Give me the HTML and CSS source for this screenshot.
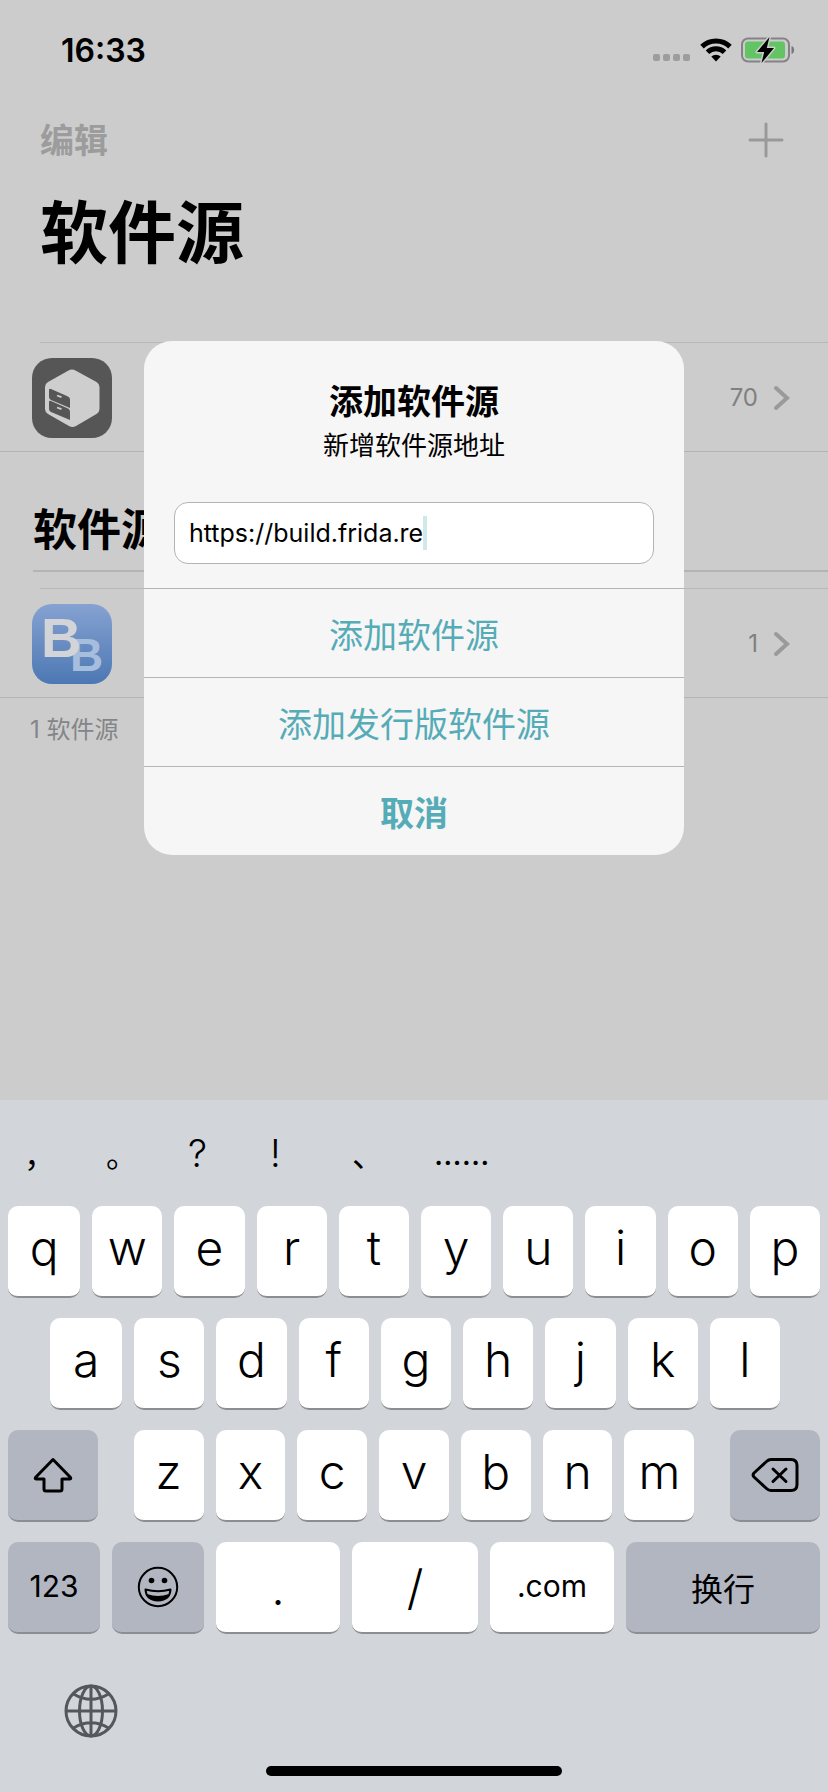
FILE: index.html
```html
<!DOCTYPE html>
<html lang="zh-CN">
<head>
<meta charset="utf-8">
<meta name="viewport" content="width=device-width, initial-scale=1">
<title>软件源</title>
<link rel="stylesheet" href="styles.css">
</head>
<body>
<div class="screen">
  <main class="app">
    <header class="status">
      <time class="clock">16:33</time>
      <div class="status-icons">
        <svg width="38" height="24" viewBox="0 0 38 24" fill="#9d9d9d"><rect x="0" y="16" width="7" height="7" rx="2"/><rect x="10" y="16" width="7" height="7" rx="2"/><rect x="20" y="16" width="7" height="7" rx="2"/><rect x="30" y="16" width="7" height="7" rx="2"/></svg>
        <svg width="32" height="24" viewBox="0 0 32 24" fill="none" stroke="#000" stroke-width="5"><path d="M2 8.600a20 20 0 0 1 28 0"/><path d="M7.500 14.200a12.200 12.200 0 0 1 17 0"/><path d="M11.300 18.600a6.800 6.800 0 0 1 9.400 0L16 23.500z" fill="#000" stroke="none"/></svg>
        <svg width="54" height="26" viewBox="0 0 54 26"><rect x="1" y="1.500" width="47" height="23" rx="6" fill="none" stroke="#848286" stroke-width="2"/><rect x="4" y="4.500" width="40" height="17" rx="3" fill="#62c463"/><path d="M50.500 9c3.500 1 3.500 7 0 8z" fill="#777"/><path d="M28.500 0 16 15h7.200L20.500 26 33 11h-7.200z" fill="#000" stroke="#ccc" stroke-width="3" paint-order="stroke" stroke-linejoin="round"/></svg>
      </div>
    </header>
    <nav class="nav">
      <button class="edit" type="button">编辑</button>
      <button class="add" type="button" aria-label="添加"><svg width="36" height="36" viewBox="0 0 36 36" stroke="#999" stroke-width="3" stroke-linecap="round"><path d="M18 2v32M2 18h32"/></svg></button>
    </nav>
    <h1 class="page-title">软件源</h1>
    <ul class="list">
      <li class="row">
        <svg class="row-icon" width="80" height="80" viewBox="0 0 80 80"><rect width="80" height="80" rx="20" fill="#565656"/><path d="M36.500 12.500q3.500-2 7 0l21 11.500q3 1.800 3 5v22q0 3.200-3 5L44 68q-3.500 2-7 0L16 56q-3-1.800-3-5V29q0-3.200 3-5z" fill="#cecece"/><g fill="#565656"><path d="m19 31 17 7.500q2 1 2 3V50L19 42q-2-1-2-3v-7q0-2 2-1z"/><path d="m19 43 17 7.500q2 1 2 3V62L19 54q-2-1-2-3v-7q0-2 2-1z"/></g><path d="m25 37.500 4.500 1.700M25 49.500l4.500 1.700" stroke="#cecece" stroke-width="1.800"/></svg>
        <span class="count">70</span>
        <svg class="chevron" width="16" height="26" viewBox="0 0 16 26"><path d="M2 3l11 10L2 23" fill="none" stroke="#9a9a9a" stroke-width="4" stroke-linecap="round"/></svg>
      </li>
    </ul>
    <h2 class="section-title">软件源</h2>
    <ul class="list">
      <li class="row">
        <svg class="row-icon" width="80" height="80" viewBox="0 0 80 80"><defs><linearGradient id="blue" x2="0" y2="1"><stop stop-color="#85a2d1"/><stop offset="1" stop-color="#4d78b3"/></linearGradient></defs><rect width="80" height="80" rx="20" fill="url(#blue)"/><text class="letter" x="38" y="67" font-size="46" fill="#a6bddd">B</text><text class="letter" x="9" y="53" font-size="56" fill="#d2d4d7">B</text></svg>
        <span class="count">1</span>
        <svg class="chevron" width="16" height="26" viewBox="0 0 16 26"><path d="M2 3l11 10L2 23" fill="none" stroke="#9a9a9a" stroke-width="4" stroke-linecap="round"/></svg>
      </li>
    </ul>
    <p class="footnote">1 软件源</p>

    <div class="overlay">
      <form class="dialog" role="dialog" aria-labelledby="dialog-title">
        <div class="dialog-body">
          <h2 class="dialog-title" id="dialog-title">添加软件源</h2>
          <label class="dialog-label" for="source">新增软件源地址</label>
          <div class="field"><input class="url" id="source" type="text" value="https://build.frida.re"><span class="caret"></span></div>
        </div>
        <button class="action" type="button">添加软件源</button>
        <button class="action" type="button">添加发行版软件源</button>
        <button class="action cancel" type="button">取消</button>
      </form>
    </div>
  </main>

  <section class="keyboard" aria-label="键盘">
    <div class="suggestions">
      <button type="button">，</button><button type="button">。</button><button class="mark" type="button">?</button><button class="mark" type="button">!</button><button type="button">、</button><button type="button">……</button>
    </div>
    <div class="keys">
      <div class="key-row top-row">
        <button class="key" type="button">q</button><button class="key" type="button">w</button><button class="key" type="button">e</button><button class="key" type="button">r</button><button class="key" type="button">t</button><button class="key" type="button">y</button><button class="key" type="button">u</button><button class="key" type="button">i</button><button class="key" type="button">o</button><button class="key" type="button">p</button>
      </div>
      <div class="key-row home-row">
        <button class="key" type="button">a</button><button class="key" type="button">s</button><button class="key" type="button">d</button><button class="key" type="button">f</button><button class="key" type="button">g</button><button class="key" type="button">h</button><button class="key" type="button">j</button><button class="key" type="button">k</button><button class="key" type="button">l</button>
      </div>
      <div class="key-row shift-row">
        <button class="key dark" type="button" aria-label="Shift"><svg width="40" height="36" viewBox="0 0 40 36" fill="none" stroke="#000" stroke-width="3" stroke-linejoin="round"><path d="M20 2.500 2.500 20.500q-.8 1.500 1 1.500H11v10q0 2 2 2h14q2 0 2-2V22h7.500q1.800 0 1-1.500z"/></svg></button>
        <div class="letters">
          <button class="key" type="button">z</button><button class="key" type="button">x</button><button class="key" type="button">c</button><button class="key" type="button">v</button><button class="key" type="button">b</button><button class="key" type="button">n</button><button class="key" type="button">m</button>
        </div>
        <button class="key dark" type="button" aria-label="删除"><svg width="48" height="36" viewBox="0 0 48 36" fill="none" stroke="#000" stroke-width="3" stroke-linejoin="round" stroke-linecap="round"><path d="M20 2.500h20q6 0 6 6v19q0 6-6 6H20q-2.500 0-4.500-2L3 20q-1.800-2 0-4L15.500 4.500q2-2 4.500-2z"/><path d="m22 12 13 12.500M35 12 22 24.500"/></svg></button>
      </div>
      <div class="key-row bottom-row">
        <button class="key dark small" type="button">123</button>
        <button class="key dark" type="button" aria-label="表情"><svg width="42" height="42" viewBox="0 0 42 42"><circle cx="21" cy="21" r="19.200" fill="none" stroke="#000" stroke-width="2"/><circle cx="14.500" cy="14.500" r="2.800"/><circle cx="27.500" cy="14.500" r="2.800"/><path d="M8.500 23.500q12.500 3.500 25 0-.5 10.500-12.500 11-12-.5-12.500-11z" fill="none" stroke="#000" stroke-width="2" stroke-linejoin="round"/><path d="M10 28q11 4 22 0-2.500 6-11 6.500-8.500-.5-11-6.500z"/></svg></button>
        <button class="key symbol" type="button">.</button>
        <button class="key symbol" type="button">/</button>
        <button class="key small" type="button">.com</button>
        <button class="key dark return" type="button">换行</button>
      </div>
    </div>
    <div class="tools">
      <button class="globe" type="button" aria-label="切换键盘"><svg width="54" height="54" viewBox="0 0 54 54" fill="none" stroke="#54585c" stroke-width="3"><circle cx="27" cy="27" r="25"/><ellipse cx="27" cy="27" rx="11.500" ry="25"/><path d="M27 2v50M2 27h50M9.500 10q17.500 10.500 35 0M9.500 44q17.500-10.500 35 0"/></svg></button>
    </div>
    <div class="home-indicator"></div>
  </section>
</div>
</body>
</html>
```
FILE: styles.css
```css
* { box-sizing: border-box; }
body {
  margin: 0;
  font-family: Inter, "Noto Sans CJK SC", sans-serif;
  color: #000;
  background: #ccc;
}
button {
  margin: 0;
  padding: 0;
  border: 0;
  background: none;
  color: inherit;
  font: inherit;
}
svg { display: block; flex: none; }
h1, h2, p, ul { margin: 0; padding: 0; }
ul { list-style: none; }

.screen { min-height: 100vh; display: flex; flex-direction: column; }
.app { position: relative; flex: 1; background: #ccc; }

.status {
  display: flex;
  justify-content: space-between;
  align-items: center;
  height: 100px;
  padding: 0 33px 0 61px;
}
.clock { font-size: 32px; font-weight: 600; }
.status-icons { display: flex; align-items: center; gap: 9px; }

.nav {
  display: flex;
  justify-content: space-between;
  align-items: center;
  height: 80px;
  padding: 0 44px 0 40px;
}
.edit { padding-bottom: 4px; font-size: 34px; font-weight: 700; color: #9c9c9c; }

.page-title {
  padding: 0 40px;
  font-size: 68px;
  font-weight: 700;
  line-height: 106px;
  margin-bottom: 56px;
}

.row {
  display: flex;
  align-items: center;
  height: 110px;
  padding: 2px 38px 0 32px;
  border-bottom: 1px solid #b4b4b4;
  background: linear-gradient(#b8b8b8, #b8b8b8) 40px 0 / 100% 1px no-repeat;
}
.row-icon { margin-right: auto; }
.letter { font-family: "Liberation Sans", sans-serif; font-weight: 700; }
.count { font-size: 24px; color: #808080; }
.chevron { margin-left: 16px; }

.section-title {
  margin: 0 0 16px 33px;
  padding-top: 38px;
  font-size: 44px;
  font-weight: 700;
  line-height: 80px;
  border-bottom: 2px solid #b4b4b4;
}
.footnote {
  padding: 12px 30px;
  font-size: 24px;
  font-weight: 400;
  line-height: 40px;
  color: #848588;
}

.overlay {
  position: absolute;
  inset: 0;
  display: flex;
  align-items: center;
  justify-content: center;
  padding-top: 96px;
}
.dialog {
  width: 540px;
  max-width: 90%;
  border-radius: 28px;
  background: #f6f6f6;
  overflow: hidden;
}
.dialog-body {
  display: flex;
  flex-direction: column;
  padding: 37px 30px 24px;
  text-align: center;
}
.dialog-title { font-size: 34px; font-weight: 700; line-height: 48px; }
.dialog-label { font-size: 26px; font-weight: 400; line-height: 40px; }
.field {
  display: flex;
  align-items: center;
  height: 62px;
  margin-top: 36px;
  padding: 0 14px;
  border: 1px solid #b4b4b4;
  border-radius: 14px;
  background: #fff;
}
.url {
  field-sizing: content;
  max-width: 100%;
  padding: 0;
  border: 0;
  outline: 0;
  background: none;
  color: #000;
  font: 25px Inter, sans-serif;
}
.caret { width: 4px; height: 34px; background: #cfe8e8; }
.action {
  display: block;
  width: 100%;
  height: 89px;
  border-top: 1px solid #b4b4b4;
  font-size: 34px;
  font-weight: 400;
  color: #55abb6;
}
.cancel { font-weight: 700; }

.keyboard { padding-bottom: 16px; background: #d2d6db; }
.suggestions {
  display: flex;
  align-items: center;
  height: 106px;
  padding-left: 24px;
}
.suggestions button {
  min-width: 82px;
  text-align: left;
  font-size: 32px;
  font-weight: 400;
}
.suggestions .mark { font-size: 38px; font-weight: 300; }
.keys { display: grid; gap: 20px; padding: 0 8px; }
.key-row { display: grid; gap: 12px; }
.top-row { grid-template-columns: 72fr repeat(9, 70fr); }
.home-row { grid-template-columns: 72fr repeat(8, 70fr); padding: 0 40px 0 42px; }
.shift-row { grid-template-columns: 90fr 562fr 90fr; gap: 36px; }
.bottom-row { grid-template-columns: 92fr 92fr 124fr 126fr 124fr 194fr; }
.letters { display: grid; grid-template-columns: repeat(7, 1fr); gap: 12px; }
.key {
  display: flex;
  align-items: center;
  justify-content: center;
  min-width: 0;
  height: 92px;
  padding-bottom: 8px;
  border-bottom: 2px solid #8b8e92;
  border-radius: 10px;
  background: #fff;
  font-size: 48px;
  font-weight: 300;
}
.symbol { padding-bottom: 0; }
.dark { padding-bottom: 0; background: #b2b6c0; }
.small { padding-bottom: 2px; font-size: 30px; font-weight: 400; }
.return { font-size: 32px; font-weight: 400; }
.tools { padding: 50px 64px; }
.globe { display: block; }
.home-indicator {
  width: 296px;
  height: 10px;
  margin: -22px auto 0;
  border-radius: 5px;
  background: #000;
}
```
